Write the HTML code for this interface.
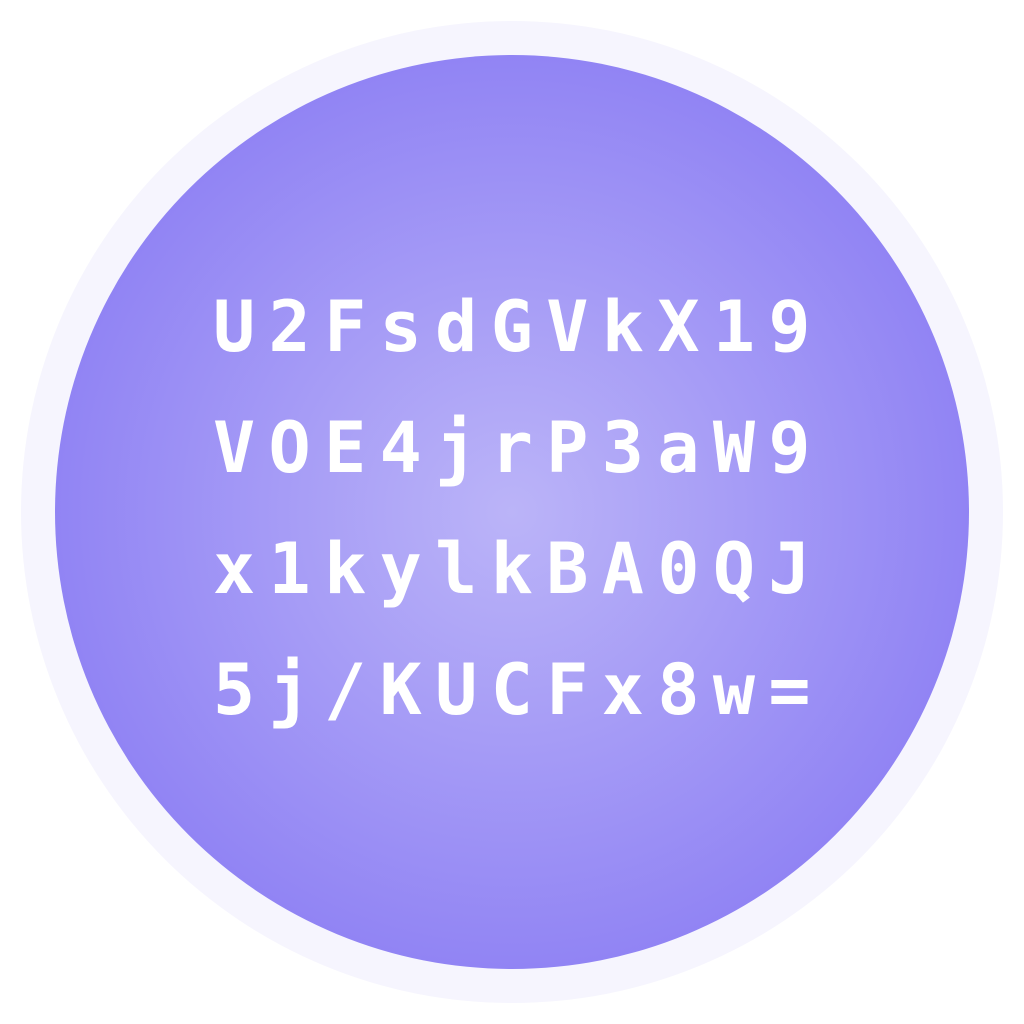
<!DOCTYPE html>
<html><head><style>html,body{margin:0;padding:0;background:#fff;width:1024px;height:1024px;overflow:hidden}</style></head>
<body>
<svg width="1024" height="1024" viewBox="0 0 1024 1024" xmlns="http://www.w3.org/2000/svg">
<defs>
<radialGradient id="g" cx="512" cy="512" r="457" gradientUnits="userSpaceOnUse">
<stop offset="0" stop-color="#bbb4f8"/>
<stop offset="1" stop-color="#9184f4"/>
</radialGradient>
</defs>
<circle cx="512" cy="512" r="491" fill="#f6f5fe"/>
<circle cx="512" cy="512" r="457" fill="url(#g)"/>
<g fill="#fff" font-family="'DejaVu Sans Mono','Liberation Mono',monospace" font-weight="bold" font-size="70" letter-spacing="13.4">
<text x="213" y="351">U2FsdGVkX19</text>
<text x="213" y="472">VOE4jrP3aW9</text>
<text x="213" y="593">x1kylkBA0QJ</text>
<text x="213" y="714">5j/KUCFx8w=</text>
</g>
</svg>
</body></html>
